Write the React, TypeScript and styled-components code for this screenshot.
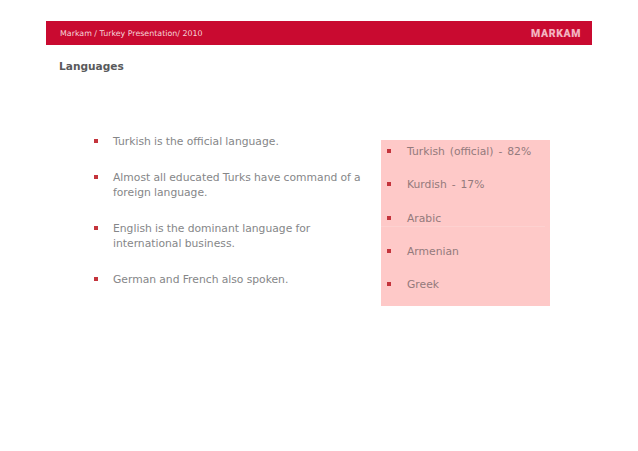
import React from "react";
import styled, { createGlobalStyle } from "styled-components";

const Global = createGlobalStyle`
  html, body { margin: 0; padding: 0; background: #fff; }
  body { font-family: "DejaVu Sans", Verdana, sans-serif; }
`;

const Page = styled.div`
  width: 638px;
  height: 451px;
  padding: 21px 46px 0;
  box-sizing: border-box;
  overflow: hidden;
`;

const Bar = styled.header`
  height: 24px;
  background: #c90a30;
  display: flex;
  align-items: center;
  justify-content: space-between;
  padding: 0 11px 0 14px;
`;

const Crumb = styled.span`
  font-size: 7.9px;
  color: #f6d5da;
`;

const Logo = styled.span`
  font-family: Roboto, sans-serif;
  font-size: 10.5px;
  font-weight: 900;
  letter-spacing: 0.6px;
  color: #f3b4c0;
`;

const Title = styled.h1`
  margin: 13px 0 0 13px;
  font-size: 10.6px;
  line-height: 16px;
  font-weight: 700;
  color: #595a5c;
`;

const Columns = styled.main`
  display: flex;
  align-items: flex-start;
  margin-top: 53px;
`;

const LeftList = styled.ul`
  list-style: none;
  margin: 0 0 0 48px;
  padding: 7px 0 0;
  width: 287px;
  display: flex;
  flex-direction: column;
  gap: 21px;
`;

const Item = styled.li`
  display: grid;
  grid-template-columns: 19px 1fr;
  font-size: 10.75px;
  line-height: 15px;
  word-spacing: -0.2px;
  color: #858688;
`;

const Bullet = styled.span`
  width: 4px;
  height: 4px;
  margin-top: 5px;
  background: #c4343c;
`;

const Box = styled.ul`
  list-style: none;
  margin: 13px 0 0;
  padding: 4px 0 0;
  width: 169px;
  height: 166px;
  box-sizing: border-box;
  background: #fec9c8;
`;

const BoxItem = styled.li`
  position: relative;
  display: grid;
  grid-template-columns: 20px 1fr;
  align-items: start;
  padding-left: 6px;
  height: 33.3px;
  font-size: 10.75px;
  line-height: 15px;
  word-spacing: 1.5px;
  color: #937a7c;

  &:nth-child(3)::after {
    content: "";
    position: absolute;
    left: 0;
    right: 5px;
    top: 15px;
    height: 1px;
    background: #fdd1d0;
  }
`;

const left = [
  "Turkish is the official language.",
  "Almost all educated Turks have command of a foreign language.",
  "English is the dominant language for international business.",
  "German and French also spoken.",
];
const right = ["Turkish (official) - 82%", "Kurdish - 17%", "Arabic", "Armenian", "Greek"];

export default function App() {
  return (
    <Page>
      <Global />
      <Bar>
        <Crumb>Markam / Turkey Presentation/ 2010</Crumb>
        <Logo>MARKAM</Logo>
      </Bar>
      <Title>Languages</Title>
      <Columns>
        <LeftList>
          {left.map((t) => (
            <Item key={t}>
              <Bullet />
              <span>{t}</span>
            </Item>
          ))}
        </LeftList>
        <Box>
          {right.map((t) => (
            <BoxItem key={t}>
              <Bullet />
              <span>{t}</span>
            </BoxItem>
          ))}
        </Box>
      </Columns>
    </Page>
  );
}
